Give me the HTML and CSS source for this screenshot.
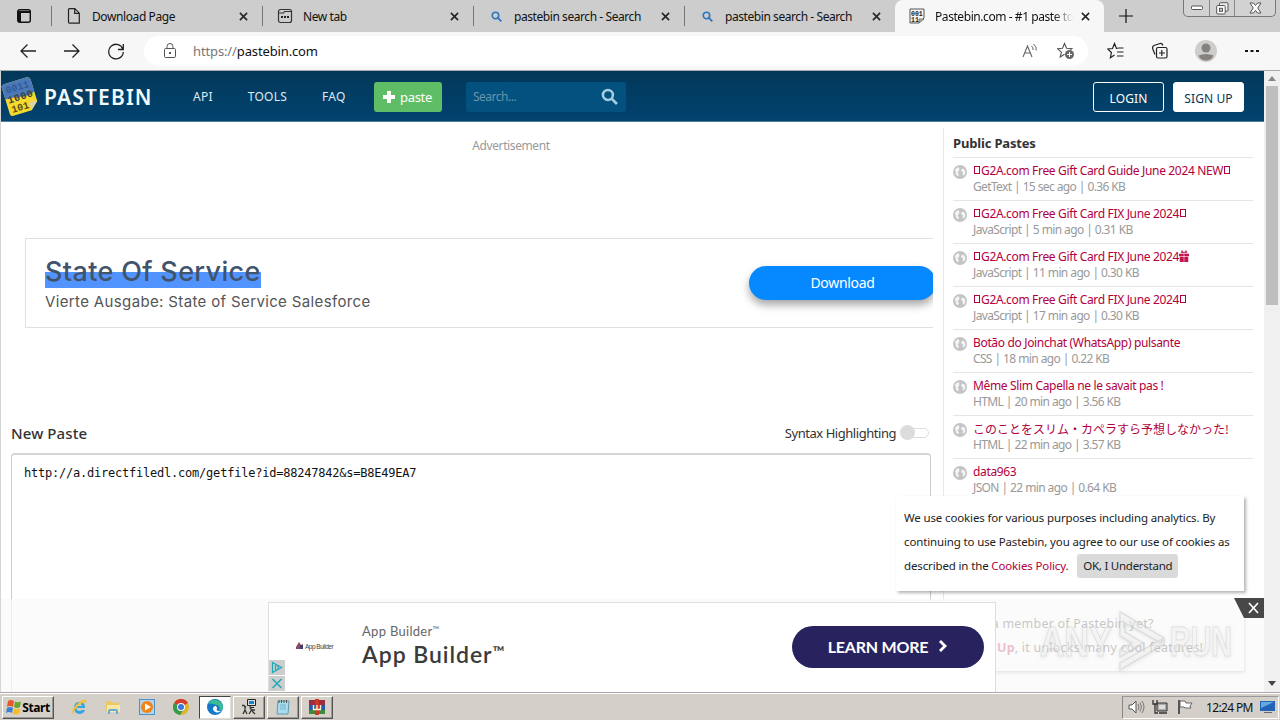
FILE: index.html
```html
<!DOCTYPE html>
<html lang="en">
<head>
<meta charset="utf-8">
<title>Pastebin.com - #1 paste tool</title>
<link rel="stylesheet" href="styles.css">
</head>
<body>
<svg width="0" height="0" class="defs">
  <symbol id="x" viewBox="0 0 10 10"><path d="M1 1l8 8M9 1L1 9" stroke="#222" stroke-width="1.7"/></symbol>
  <symbol id="mag" viewBox="0 0 16 16"><circle cx="6.5" cy="6.5" r="4.7" fill="none" stroke="currentColor" stroke-width="2.4"/><path d="M10 10l5 5" stroke="currentColor" stroke-width="2.6"/></symbol>
  <symbol id="globe" viewBox="0 0 14 14"><circle cx="7" cy="7" r="7" fill="#c4c4c4"/><path d="M2 4.500L5 2l1.500 1.500L6 6 4.500 7.500 6 9l-1 2.500L3 9.500zM9 3.500l2.500 1 1 3-1.500 3-1.500-.5.500-2.500-2-1.500z" fill="#f5f5f5"/></symbol>
</svg>
<div class="screen">
  <div class="tabs">
    <div class="tabmenu"><svg width="16" height="16" viewBox="0 0 16 16"><rect x="1.7" y="1.7" width="12.6" height="12.6" rx="2" fill="none" stroke="#111" stroke-width="1.4"/><path d="M2 3h12v2H2zM2 5h3v9H2z" fill="#111"/></svg></div>
    <div class="tab"><svg class="ico" viewBox="0 0 16 16"><path d="M3.5.7h5.3l4.5 4.5v10H3.500a1 1 0 0 1-1-1V1.700a1 1 0 0 1 1-1zM8.700.9v4.500h4.500" fill="none" stroke="#222" stroke-width="1.200"/></svg><span class="t t1">Download Page</span><svg class="x"><use href="#x"/></svg></div>
    <div class="tab"><svg class="ico" viewBox="0 0 16 16"><path d="M1.500 4.500V3.500a2 2 0 0 1 2-2h9a2 2 0 0 1 2 2v9a2 2 0 0 1-2 2h-9a2 2 0 0 1-2-2zM1.500 5h5l1-1.500h7" fill="none" stroke="#333" stroke-width="1.200"/><path d="M4 9h2M7 9h2M10 9h2" stroke="#222" stroke-width="1.800"/></svg><span class="t t1">New tab</span><svg class="x"><use href="#x"/></svg></div>
    <div class="tab"><span class="ico"><svg class="blue"><use href="#mag"/></svg></span><span class="t">pastebin search - Search</span><svg class="x"><use href="#x"/></svg></div>
    <div class="tab"><span class="ico"><svg class="blue"><use href="#mag"/></svg></span><span class="t">pastebin search - Search</span><svg class="x"><use href="#x"/></svg></div>
    <div class="tab active"><svg class="ico" viewBox="0 0 16 16"><path d="M1 1h14v9l-5 5H1z" fill="#f4f4f4" stroke="#555"/><text x="2" y="7.500" font-size="6.500" font-weight="bold" font-family="Liberation Mono" fill="#222">001</text><text x="2" y="14" font-size="6.500" font-weight="bold" font-family="Liberation Mono" fill="#222">11</text><path d="M10 15v-4h5z" fill="#bbb" stroke="#555" stroke-width=".7"/></svg><span class="t fade">Pastebin.com - #1 paste to</span><svg class="x"><use href="#x"/></svg></div>
    <div class="plus"><svg width="14" height="14"><path d="M7 0v14M0 7h14" stroke="#111" stroke-width="1.200"/></svg></div>
    <div class="winbtns">
      <span><svg width="12" height="6"><rect x=".5" y="1" width="11" height="3.500" rx="1" fill="#fff" stroke="#555"/></svg></span>
      <span><svg width="13" height="13"><rect x="3.500" y=".7" width="8.500" height="8.500" rx="1" fill="#eee" stroke="#555"/><rect x=".7" y="3.500" width="8.500" height="8.500" rx="1" fill="#fff" stroke="#555"/><rect x="3.500" y="6.300" width="3" height="3" fill="#ccc" stroke="#555"/></svg></span>
      <span><svg width="13" height="12"><path d="M1 1h3.500l2 2.500 2-2.500H12L8.700 6l3.300 5H8.500l-2-2.700-2 2.700H1L4.300 6z" fill="#fff" stroke="#555"/></svg></span>
    </div>
  </div>

  <div class="toolbar">
    <div class="nav">
      <svg width="18" height="18"><path d="M17 9H2M8.500 2.500L2 9l6.500 6.500" fill="none" stroke="#222" stroke-width="1.300"/></svg>
      <svg width="18" height="18"><path d="M1 9h15M9.500 2.500L16 9l-6.500 6.500" fill="none" stroke="#222" stroke-width="1.300"/></svg>
      <svg width="18" height="18"><path d="M16 7.500A7.300 7.300 0 1 0 16.300 10M16.300 2v5.500H11" fill="none" stroke="#222" stroke-width="1.300"/></svg>
    </div>
    <div class="address">
      <svg width="14" height="16"><rect x="1.500" y="5.500" width="11" height="9" rx="1.200" fill="none" stroke="#555"/><path d="M4 5.500V3.500a3 3 0 0 1 6 0v2" fill="none" stroke="#555"/><rect x="6" y="9" width="2" height="2" fill="#555"/></svg>
      <span class="url"><i>https://</i>pastebin.com</span>
      <svg width="16" height="16" class="read"><path d="M1 14L5.500 3 10 14M2.700 10h5.700" fill="none" stroke="#666" stroke-width="1.100"/><path d="M9.500 3q2 1.500 1.500 4M11.500 1q3.500 2.500 2.700 6.500" fill="none" stroke="#666"/></svg>
      <svg width="18" height="18"><path d="M13.500 7.800l1.300-1.100-5.200-.4L7.500 1.500 5.500 6.300.5 6.700l3.900 3.400L3.200 15 7.500 12.300" fill="none" stroke="#555" stroke-width="1.100"/><circle cx="12.500" cy="12.500" r="4.500" fill="#666"/><path d="M12.500 10v5M10 12.500h5" stroke="#fff"/></svg>
    </div>
    <div class="tools">
      <svg width="18" height="18"><path d="M10.500 6.500h-1L7.500 1.500 5.500 6.500.8 7l3.600 3.500-1 5.200L7.500 13M10.500 6h6M10 10h6.500M10 14h6.500" fill="none" stroke="#222" stroke-width="1.200"/></svg>
      <svg width="18" height="18"><rect x="5.500" y="5.500" width="10.500" height="10.500" rx="1.500" fill="none" stroke="#222" stroke-width="1.200"/><path d="M10.800 8v6M8 11h6M4 12.500L1.800 7Q1 4.500 3 3.500l6-2q2-.5 3 2" fill="none" stroke="#222" stroke-width="1.200"/></svg>
      <svg width="22" height="22"><circle cx="11" cy="11" r="11" fill="#cfcdcb"/><circle cx="11" cy="8" r="4.500" fill="#85817e"/><path d="M3.500 15.500q7.500-3 15 0-2 5-7.500 5t-7.500-5z" fill="#85817e"/></svg>
      <svg width="14" height="4"><path d="M0 1h3v2H0zM5.500 1h3v2h-3zM11 1h3v2h-3z" fill="#111"/></svg>
    </div>
  </div>

  <div class="page">
    <div class="view">
      <header class="head">
        <svg class="logo" width="38" height="42" viewBox="0 0 38 42"><g transform="rotate(-17 19 21)"><path d="M4 8q0-3 3-3h23q4 0 4 4v22l-8 7H7q-3 0-3-3z" fill="#f5d92f"/><path d="M4 20V8q0-3 3-3h23q4 0 4 4v12q-8 3-14 1T4 20z" fill="#4a78b8"/><path d="M26 38v-6q0-2 2-2h6z" fill="#d9d2b5"/><g font-family="Liberation Mono" font-weight="bold" font-size="10"><text x="7" y="15" fill="#2f5d95" textLength="24">0011</text><text x="6" y="25" fill="#39403a" textLength="26">1000</text><text x="7" y="35" fill="#5b4d12" textLength="18">101</text></g></g></svg>
        <span class="brand">PASTEBIN</span>
        <nav class="links"><a>API</a><a>TOOLS</a><a>FAQ</a></nav>
        <span class="paste"><svg width="14" height="14"><path d="M5 1h4v4h4v4H9v4H5V9H1V5h4z" fill="#fff"/></svg>paste</span>
        <span class="search"><em>Search...</em><svg width="17" height="17"><use href="#mag"/></svg></span>
        <span class="login">LOGIN</span><span class="login signup">SIGN UP</span>
      </header>
      <div class="cols">
        <main class="main">
          <div class="advert">Advertisement</div>
          <div class="banner">
            <div><h2>State Of Service</h2><p>Vierte Ausgabe: State of Service Salesforce</p></div>
            <span class="download">Download</span>
          </div>
          <div class="newpaste"><h3>New Paste</h3><span class="syntax">Syntax Highlighting</span><span class="switch"></span></div>
          <div class="editor">http://a.directfiledl.com/getfile?id=88247842&amp;s=B8E49EA7</div>
        </main>
        <aside class="side">
          <h4>Public Pastes</h4>
          <div class="item"><svg><use href="#globe"/></svg><div><a><b class="tofu"></b>G2A.com Free Gift Card Guide June 2024 NEW<b class="tofu"></b></a><small>GetText | 15 sec ago | 0.36 KB</small></div></div>
          <div class="item"><svg><use href="#globe"/></svg><div><a><b class="tofu"></b>G2A.com Free Gift Card FIX June 2024<b class="tofu"></b></a><small>JavaScript | 5 min ago | 0.31 KB</small></div></div>
          <div class="item"><svg><use href="#globe"/></svg><div><a><b class="tofu"></b>G2A.com Free Gift Card FIX June 2024<svg class="gift" viewBox="0 0 10 12"><path d="M0 4h4.500v2H0zM5.500 4H10v2H5.500zM1 7h3.500v5H1zM5.500 7H9v5H5.500zM5 3L2 2.500 3 .5zM5 3l3-.5L7 .5z" fill="#c4174f" stroke="#c4174f" stroke-width=".5"/></svg></a><small>JavaScript | 11 min ago | 0.30 KB</small></div></div>
          <div class="item"><svg><use href="#globe"/></svg><div><a><b class="tofu"></b>G2A.com Free Gift Card FIX June 2024<b class="tofu"></b></a><small>JavaScript | 17 min ago | 0.30 KB</small></div></div>
          <div class="item"><svg><use href="#globe"/></svg><div><a>Botão do Joinchat (WhatsApp) pulsante</a><small>CSS | 18 min ago | 0.22 KB</small></div></div>
          <div class="item"><svg><use href="#globe"/></svg><div><a>Même Slim Capella ne le savait pas !</a><small>HTML | 20 min ago | 3.56 KB</small></div></div>
          <div class="item"><svg><use href="#globe"/></svg><div><a class="jp">このことをスリム・カペラすら予想しなかった!</a><small>HTML | 22 min ago | 3.57 KB</small></div></div>
          <div class="item"><svg><use href="#globe"/></svg><div><a>data963</a><small>JSON | 22 min ago | 0.64 KB</small></div></div>
        </aside>
      </div>
      <div class="member">Not a member of Pastebin yet?<br><b>Sign Up</b>, it unlocks many cool features!</div>
      <div class="cookies">We use cookies for various purposes including analytics. By<br>continuing to use Pastebin, you agree to our use of cookies as<br>described in the <a>Cookies Policy</a>. <span class="ok">OK, I Understand</span></div>
      <div class="sticky">
        <div class="box">
          <div class="mini"><svg width="8" height="8"><path d="M0 5l3-5 2 3 2-1v5H0z" fill="#8d4a5a"/><path d="M4 3h3v4H4z" fill="#413a6b"/></svg><span>App Builder</span></div>
          <div class="copy"><span>App Builder<sup>™</sup></span><strong>App Builder<sup>™</sup></strong></div>
          <div class="more">LEARN MORE<svg width="10" height="14"><path d="M2 2l5 5-5 5" fill="none" stroke="#fff" stroke-width="2.800"/></svg></div>
          <div class="choices"><svg width="16" height="15"><path d="M3.500 2.500v10l9-5zM6.500 5v5M9 6v3" fill="none" stroke="#18a9b5" stroke-width="1.200"/></svg><svg width="16" height="15"><path d="M3.500 3l9 9M12.500 3l-9 9" stroke="#18a9b5" stroke-width="1.400"/></svg></div>
        </div>
      </div>
      <svg class="wm" width="204" height="76"><g font-family="Liberation Sans" font-weight="bold" font-size="42"><text x="8" y="48" textLength="72" lengthAdjust="spacingAndGlyphs">ANY</text><text x="138" y="48" textLength="62" lengthAdjust="spacingAndGlyphs">RUN</text></g><path d="M88 4l44 26-3 5-36-20v9l18 11-23 14V42l12-7-12-7zM88 55l44-25v6L88 62z" class="tri"/></svg>
      <svg class="shut" width="30" height="20"><path d="M0 0h30v20H10z" fill="#484848"/><path d="M15 5l9 10M24 5l-9 10" stroke="#fff" stroke-width="1.700"/></svg>
    </div>
    <div class="scroll"><svg width="16" height="15"><path d="M4 10l4-5 4 5z" fill="#888"/></svg><i></i><svg width="16" height="16"><path d="M4 6h8l-4 5z" fill="#444"/></svg></div>
  </div>

  <div class="taskbar">
    <div class="btn start"><svg width="16" height="16"><path d="M2 2q3-2 6 0L7 8Q4 6 1 8z" fill="#e6582b"/><path d="M9 2.500q3 1.500 6 0L14 8q-3 2-6 0z" fill="#66a92c"/><path d="M1 9q3-2 6 0l-1 5q-3-2-6 0z" fill="#3a7fd5"/><path d="M8 9.500q3 1.500 6 0l-1 5q-3 2-6 0z" fill="#f5bd20"/></svg>Start</div>
    <div class="quick">
      <svg viewBox="0 0 16 16"><path fill-rule="evenodd" d="M14 9H5.500q.3 3 3 3 1.500 0 2.300-1H14q-1.500 4-5.500 4Q3 14.500 3 8.800 3 3 8.500 3 14.500 3 14 9zM5.500 7H11q-.3-2-2.700-2T5.500 7z" fill="#35a5e0"/><path d="M1.500 14.500Q-.5 11 6 5t9-4q1 1.500-.5 4 .5-2.500-2.500-1.300T4 10.500q-2.500 3.500-.5 4z" fill="#f1c338"/></svg>
      <svg viewBox="0 0 16 16"><path d="M1 2h5l1 1.500h7V13H1z" fill="#e9c867"/><path d="M2 6h13v7H2z" fill="#f8e8a4"/><path d="M3 15v-3q0-2 2-2h6q2 0 2 2v3h-2v-3H5v3z" fill="#65abd7"/></svg>
      <svg viewBox="0 0 16 16"><rect x=".5" y=".5" width="15" height="15" fill="#b4d4ed" stroke="#4b91c8"/><circle cx="8" cy="8" r="6" fill="#ee8516"/><path d="M6 4.500l6 3.500-6 3.500z" fill="#fff"/></svg>
      <svg viewBox="0 0 16 16"><circle cx="8" cy="8" r="8" fill="#ddb62b"/><path d="M8 8L1 4a8 8 0 0 1 14 0z" fill="#d83c2e"/><path d="M8 8L1 4a8 8 0 0 0 6 12l4-6z" fill="#389b4a"/><circle cx="8" cy="8" r="4" fill="#fff"/><circle cx="8" cy="8" r="3" fill="#3978da"/></svg>
    </div>
    <div class="btn app on"><svg viewBox="0 0 16 16"><circle cx="8" cy="8" r="8" fill="#1679c8"/><path d="M1 5a8 8 0 0 1 15 4q-1 3-4 2.500 2-5-4-6Q3 4 1 5z" fill="#39bd91"/><path d="M6 9q1-2.500 3-2 2 2 .5 4 2 2 5 .5-3 3-6 1.500T6 9z" fill="#fff"/></svg></div>
    <div class="btn app"><svg viewBox="0 0 16 16"><path d="M6.500.5h8v6h-8z" fill="#ddd" stroke="#222"/><path d="M8 2h5v3H8z" fill="#1688d0"/><path d="M9 7v1.500h4" stroke="#222" fill="none"/><path d="M1 6.500h2l2 2M4 7v4l-2 4M4 11l2 4M9 9l2 2h3M11 10l-3 5M11 12l3 3" fill="none" stroke="#333" stroke-width="1.300"/></svg></div>
    <div class="btn app"><svg viewBox="0 0 16 16"><path d="M3 2h11l-1 13H2z" fill="#a9dced" stroke="#6199ae"/><path d="M4 1v3M6.500 1v3M9 1v3M11.500 1v3" stroke="#555"/><path d="M5 6h6M5 8h6M5 10h6" stroke="#74b5cd"/></svg></div>
    <div class="btn app"><svg viewBox="0 0 16 16"><path d="M0 1h16v5H0z" fill="#a22b3c"/><path d="M0 6h16v5H0z" fill="#2859a6"/><path d="M0 11h16v4H0z" fill="#3e8a3a"/><path d="M6 0h4v16H6z" fill="#c8392a"/><path d="M4.500 6v4.500h7V6M8 6v4" fill="none" stroke="#fff3cc" stroke-width="1.400"/></svg></div>
    <div class="tray">
      <svg width="17" height="16"><path d="M1 6h3l4-4v12l-4-4H1z" fill="#fff" stroke="#555"/><path d="M10 5q2 3 0 6M12 3.500q3 4.500 0 9M14 2q4 6 0 12" fill="none" stroke="#777"/></svg>
      <svg width="17" height="16"><path d="M5 4h10v8H5z" fill="#aaa" stroke="#333"/><path d="M7 6h6v4H7z" fill="#ddd"/><path d="M7 14h8M1 1v4h4V1M3 5v9h3" fill="none" stroke="#333" stroke-width="1.300"/></svg>
      <svg width="18" height="16"><path d="M3 1v14" stroke="#555" stroke-width="2"/><path d="M4 2h5l1 2h6l-2 3 1 2h-6l-1-1H4z" fill="#fff" stroke="#666"/></svg>
      <span class="clock">12:24 PM</span>
      <svg width="16" height="14"><path d="M0 1h15v10H0z" fill="#2163b4"/><path d="M1 2h13L1 8z" fill="#63a7e4"/><path d="M4 12h8v1H4z" fill="#667"/></svg>
    </div>
  </div>
</div>
</body>
</html>
```

FILE: styles.css
```css
* { box-sizing: border-box; }
body { margin: 0; overflow: hidden; font-family: "Noto Sans", "Noto Sans CJK JP", sans-serif; }
.defs { position: absolute; }
svg { display: block; flex: none; }
.screen { width: 1280px; height: 720px; display: flex; flex-direction: column; overflow: hidden; background: #fff; }

.tabs { height: 32px; flex: none; display: flex; background: #cdcdcd; }
.tabmenu { width: 51px; display: flex; align-items: center; padding-left: 16px; }
.tab { width: 211px; padding: 0 14px 0 15px; display: flex; align-items: center; position: relative; }
.tab::before { content: ""; position: absolute; left: 0; top: 6px; width: 1px; height: 20px; background: #777; }
.tab .ico { width: 16px; height: 16px; display: flex; align-items: center; justify-content: center; }
.tab .blue { width: 11px; height: 11px; color: #2f76c0; }
.tab .t { margin-left: 10px; flex: 1; font-size: 12px; letter-spacing: -.43px; white-space: nowrap; overflow: hidden; color: #111; }
.tab .t1 { letter-spacing: -.4px; }
.tab .x { width: 9px; height: 9px; margin-left: 8px; }
.tab.active { width: 209px; background: #f7f7f7; border-radius: 8px 8px 0 0; padding: 0 14px; }
.tab.active::before { display: none; }
.tab .fade { -webkit-mask-image: linear-gradient(90deg, #000 86%, transparent); mask-image: linear-gradient(90deg, #000 86%, transparent); }
.plus { width: 79px; display: flex; align-items: center; padding-left: 15px; }
.winbtns { width: 93px; height: 17px; border: 1px solid #777; border-top: 0; border-radius: 0 0 5px 5px; display: grid; grid-template-columns: 25px 25px 1fr; background: #d2d2d2; }
.winbtns span { display: flex; align-items: center; justify-content: center; }
.winbtns span + span { border-left: 1px solid #888; }

.toolbar { height: 39px; flex: none; background: #f7f7f7; border-bottom: 1px solid #aaa; display: flex; align-items: center; }
.nav { width: 144px; padding-left: 19px; display: flex; gap: 26px; }
.address { width: 944px; height: 30px; border-radius: 15px; background: #fff; display: flex; align-items: center; padding: 0 13px 0 19px; }
.url { margin-left: 16px; flex: 1; font-size: 13px; letter-spacing: -.13px; color: #111; }
.url i { font-style: normal; color: #777; }
.read { margin-right: 19px; }
.tools { flex: 1; display: flex; align-items: center; gap: 26px; padding-left: 19px; }
.tools svg:last-child { margin-left: 2px; }

.page { flex: 1; display: flex; min-height: 0; }
.view { width: 1264px; position: relative; overflow: hidden; border-left: 1px solid #d5d5d5; }
.head { height: 51px; margin-left: -1px; padding-top: 2px; display: flex; align-items: center; background: linear-gradient(#023859, #024370); border-bottom: 1px solid #527b94; color: #fff; font-size: 12px; }
.logo { margin: -3px 0 0 1px; }
.brand { width: 121px; margin-left: 5px; font-size: 21px; font-weight: 600; letter-spacing: 1.15px; color: #effaff; }
.links { width: 209px; padding-left: 28px; display: flex; gap: 35px; color: #dfebf2; letter-spacing: .25px; margin-top: -1px; }
.paste { width: 68px; height: 30px; border-radius: 3px; background: #5fbd65; display: flex; align-items: center; gap: 4px; padding: 0 0 1px 8px; font-size: 13px; letter-spacing: -.3px; }
.search { width: 160px; height: 30px; margin-left: 24px; border-radius: 3px; background: #02517f; display: flex; align-items: center; justify-content: space-between; padding: 0 8px 2px 7px; color: #a3cde2; }
.search em { font-style: normal; color: #6a94ad; letter-spacing: -.5px; }
.login { width: 71px; height: 30px; margin-left: auto; padding-top: 2px; border: 1px solid #fff; border-radius: 3px; display: flex; align-items: center; justify-content: center; letter-spacing: .1px; }
.signup { margin: 0 20px 0 9px; background: #fff; color: #023859; letter-spacing: .1px; }

.cols { display: flex; }
.main { width: 942px; padding: 17px 12px 0 10px; }
.advert { width: 921px; padding-left: 79px; text-align: center; font-size: 12px; line-height: 14px; letter-spacing: -.4px; color: #999; }
.banner { width: 908px; height: 90px; margin: 85px -2px 0 14px; border: 1px solid #e0e0e0; border-right: 0; display: flex; justify-content: space-between; overflow: hidden; padding-left: 19px; }
.banner h2 { margin: 17px 0 0; height: 32px; width: 216px; font: 500 27px/31px Inter, sans-serif; letter-spacing: .35px; white-space: nowrap; background: linear-gradient(transparent 16px, #5194ff 16px); color: #42536c; }
.banner p { margin: 2px 0 0; font: 15px/24px Inter, sans-serif; letter-spacing: .36px; white-space: nowrap; color: #555; }
.download { width: 187px; height: 34px; margin: 27px -3px 0 0; border-radius: 17px; background: #0688ff; color: #fff; text-align: center; font: 14px/33px "Noto Sans", sans-serif; letter-spacing: -.3px; box-shadow: 0 5px 8px rgba(0, 0, 0, .35); }
.newpaste { height: 24px; margin-top: 93px; display: flex; align-items: center; color: #333; }
.newpaste h3 { margin: 0; flex: 1; font-size: 15px; font-weight: 500; letter-spacing: .1px; }
.syntax { font-size: 13px; letter-spacing: -.46px; margin-right: 11px; }
.switch { width: 22px; height: 10px; margin-right: 2px; border: 1px solid #ddd; border-radius: 5px; position: relative; }
.switch::before { content: ""; position: absolute; left: -8px; top: -4px; width: 15px; height: 15px; border-radius: 50%; background: #dcdcdc; }
.editor { width: 920px; height: 260px; margin-top: 8px; margin-bottom: -60px; border: 1px solid #ccc; border-top: 2px solid #d5d5d5; border-radius: 4px; padding: 9px 12px; font: 12px/18px "DejaVu Sans Mono", monospace; letter-spacing: -.22px; color: #111; }

.side { width: 320px; border-left: 1px solid #e8e8e8; margin-top: 6px; padding: 0 9px; }
.side h4 { height: 29px; margin: 0; padding-top: 3px; font-size: 13px; line-height: 24px; letter-spacing: -.17px; color: #333; }
.item { height: 43px; border-top: 1px solid #e6e6e6; padding-top: 4px; display: flex; gap: 6px; margin-right: 1px; }
.item > svg { width: 14px; height: 14px; margin-top: 3px; }
.item a { display: flex; align-items: center; height: 16px; font-size: 12px; letter-spacing: -.34px; white-space: pre; color: #b3003c; }
.item a.jp { font-family: "Noto Sans CJK JP", sans-serif; letter-spacing: 0; }
.item small { display: block; font-size: 12px; line-height: 17px; letter-spacing: -.65px; word-spacing: .2px; color: #999; }
.tofu { width: 6px; height: 8px; margin: 0 1px 0 1px; border: 1px solid #b3003c; }
.gift { width: 10px; height: 12px; }

.cookies { position: absolute; left: 895px; top: 425px; width: 348px; height: 95px; padding: 10px 0 0 8px; background: #fff; box-shadow: 2px 2px 3px rgba(0, 0, 0, .3); font-size: 11.500px; line-height: 24px; letter-spacing: -.14px; white-space: nowrap; color: #222; }
.cookies a { color: #b3003c; }
.ok { display: inline-block; height: 24px; margin-left: 6px; padding: 0 6px; border-radius: 3px; background: #dadada; letter-spacing: -.25px; }
.member { position: absolute; left: 895px; top: 530px; width: 348px; height: 70px; padding: 11px 0 0 70px; background: #fff; box-shadow: 1px 2px 3px rgba(0, 0, 0, .3); font-size: 12.500px; line-height: 24px; letter-spacing: .22px; white-space: nowrap; color: #333; }
.member b { color: #c4174f; }
.sticky { position: absolute; left: -1px; top: 528px; width: 1264px; height: 94px; background: rgba(250, 250, 250, .74); }
.box { width: 728px; height: 91px; margin: 3px 0 0 268px; background: #fff; border: 1px solid #dedede; display: flex; position: relative; }
.mini { width: 93px; padding: 39px 0 0 27px; display: flex; gap: 1px; font: 6.500px/9px "Liberation Sans", sans-serif; letter-spacing: -.5px; color: #444; }
.mini span { white-space: nowrap; }
.copy { flex: 1; padding-top: 19px; font-family: Lato, sans-serif; color: #666; }
.copy span { display: block; font-size: 13px; line-height: 19px; letter-spacing: .3px; }
.copy strong { display: block; font-size: 23px; line-height: 27px; font-weight: 600; letter-spacing: .95px; color: #3b3b3b; }
.copy sup { font-size: .7em; line-height: 0; vertical-align: .3em; }
.more { width: 192px; height: 42px; margin: 23px 11px 0 0; padding-bottom: 2px; border-radius: 21px; background: #28235f; color: #fff; display: flex; align-items: center; justify-content: center; gap: 10px; font: 700 16px Lato, sans-serif; letter-spacing: -.2px; }
.choices { position: absolute; left: 0; bottom: 1px; display: grid; gap: 1px; }
.choices svg { background: #cdcdcd; }
.shut { position: absolute; right: 0; top: 527px; }
.wm { position: absolute; left: 1031px; top: 537px; fill: rgba(255, 255, 255, .35); stroke: rgba(195, 195, 195, .4); filter: drop-shadow(0 1px 2px rgba(120, 120, 120, .35)); }
.tri { stroke-width: 1.500; }
.scroll { width: 16px; background: #f0f0f0; display: flex; flex-direction: column; }
.scroll i { height: 219px; margin: 0 2px; background: #bebebe; }
.scroll svg:last-child { margin-top: auto; margin-bottom: 1px; }

.taskbar { height: 28px; flex: none; display: flex; align-items: center; background: #d4cfc8; border-top: 1px solid #aaa; box-shadow: inset 0 1px #fff; padding-top: 1px; }
.btn { height: 23px; background: #d5d0c8; border: 1px solid; border-color: #fff #555 #555 #fff; box-shadow: inset -1px -1px #999; display: flex; align-items: center; justify-content: center; }
.start { width: 52px; margin-left: 2px; gap: 0; font: 700 12px "Noto Sans", sans-serif; letter-spacing: -.4px; color: #000; }
.quick { width: 145px; padding-left: 17px; display: flex; gap: 18px; }
.quick svg, .app svg { width: 16px; height: 16px; }
.app { width: 32px; margin-right: 2px; }
.on { background: #fff; border-color: #444 #ddd #ddd #444; box-shadow: none; }
.tray { height: 23px; width: 157px; margin-left: auto; margin-right: 1px; padding: 0 2px 0 5px; border: 1px solid; border-color: #999 #fff #fff #888; display: flex; align-items: center; gap: 7px; color: #111; }
.clock { flex: 1; margin-left: 5px; font-size: 12px; letter-spacing: -.65px; white-space: nowrap; }
```
